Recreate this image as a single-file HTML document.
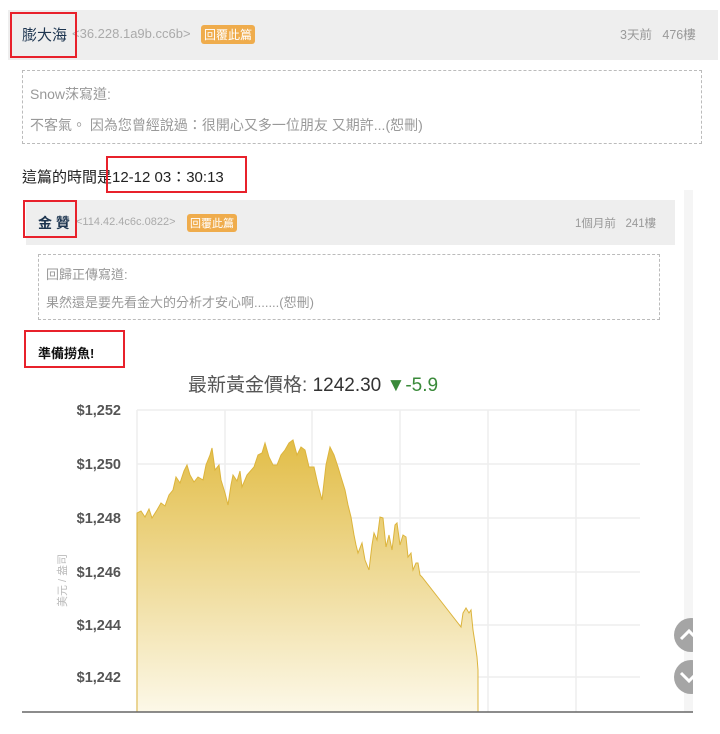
<!DOCTYPE html>
<html><head><meta charset="utf-8"><style>
body{margin:0;width:720px;height:734px;background:#fff;position:relative;overflow:hidden;font-family:"Liberation Sans","Noto Sans CJK TC",sans-serif;}
.a{position:absolute;white-space:nowrap;}
.red{position:absolute;border:2px solid #e8212b;box-sizing:border-box;}
.tag{background:#efac4c;color:#fff;border-radius:3px;padding:1px 3px;}
</style></head><body>
<div class="a" style="left:8px;top:10px;width:710px;height:50px;background:#eeeeee"></div>
<div class="a" style="left:22px;top:24px;font-size:15px;color:#1d3550">膨大海</div>
<div class="a" style="left:72px;top:26px;font-size:13px;color:#aaa">&lt;36.228.1a9b.cc6b&gt;</div>
<div class="a tag" style="left:201px;top:25px;font-size:12px;">回覆此篇</div>
<div class="a" style="left:620px;top:24px;font-size:12.5px;color:#999">3天前 &nbsp; 476樓</div>
<div class="red" style="left:10px;top:12px;width:67px;height:46px"></div>
<div class="a" style="left:22px;top:70px;width:680px;height:74px;border:1px dashed #bbb;box-sizing:border-box"></div>
<div class="a" style="left:30px;top:84px;font-size:14px;color:#999">Snow莯寫道:</div>
<div class="a" style="left:30px;top:115px;font-size:14px;color:#999">不客氣。 因為您曾經說過：很開心又多一位朋友 又期許...(恕刪)</div>
<div class="a" style="left:22px;top:166px;font-size:15px;color:#222">這篇的時間是12-12 03：30:13</div>
<div class="red" style="left:106px;top:156px;width:141px;height:37px"></div>
<div class="a" style="left:684px;top:190px;width:9px;height:522px;background:#f5f5f5"></div>
<div class="a" style="left:26px;top:200px;width:649px;height:45px;background:#eeeeee"></div>
<div class="a" style="left:38px;top:213px;font-size:14px;font-weight:bold;color:#1d3550">金 贊</div>
<div class="a" style="left:76px;top:216px;font-size:11px;color:#aaa">&lt;114.42.4c6c.0822&gt;</div>
<div class="a tag" style="left:187px;top:214px;font-size:11px;">回覆此篇</div>
<div class="a" style="left:575px;top:215px;font-size:11.5px;color:#999">1個月前 &nbsp; 241樓</div>
<div class="red" style="left:23px;top:200px;width:54px;height:38px"></div>
<div class="a" style="left:38px;top:254px;width:622px;height:66px;border:1px dashed #bbb;box-sizing:border-box"></div>
<div class="a" style="left:46px;top:264px;font-size:13px;color:#999">回歸正傳寫道:</div>
<div class="a" style="left:46px;top:292px;font-size:13px;color:#999">果然還是要先看金大的分析才安心啊.......(恕刪)</div>
<div class="a" style="left:38px;top:343px;font-size:13px;font-weight:bold;color:#111">準備撈魚!</div>
<div class="red" style="left:24px;top:330px;width:101px;height:38px"></div>
<div class="a" style="left:188px;top:370px;font-size:19px;color:#555">最新黃金價格: <span style="color:#333">1242.30</span> <span style="color:#3a8a3a">▼-5.9</span></div>
<svg class="a" style="left:0;top:395px" width="720" height="339">
<defs><linearGradient id="g" x1="0" y1="0" x2="0" y2="1"><stop offset="0" stop-color="#e2bd47"/><stop offset="1" stop-color="#fcf8e8"/></linearGradient></defs>
<g stroke="#eee" stroke-width="1.5">
<line x1="137" y1="15" x2="640" y2="15"/><line x1="137" y1="69" x2="640" y2="69"/><line x1="137" y1="123" x2="640" y2="123"/><line x1="137" y1="177" x2="640" y2="177"/><line x1="137" y1="230" x2="640" y2="230"/><line x1="137" y1="282" x2="640" y2="282"/>
<line x1="137" y1="15" x2="137" y2="317"/><line x1="225" y1="15" x2="225" y2="317"/><line x1="312" y1="15" x2="312" y2="317"/><line x1="400" y1="15" x2="400" y2="317"/><line x1="488" y1="15" x2="488" y2="317"/><line x1="576" y1="15" x2="576" y2="317"/>
</g>
<path fill="url(#g)" stroke="#dcb43c" stroke-width="1" d="M137,317 L137,118 L141,116 L145,122 L149,114 L152,123 L157,115 L161,108 L165,111 L169,100 L173,95 L176,82 L180,88 L184,76 L187,70 L190,80 L194,87 L198,82 L203,85 L206,70 L210,60 L212,53 L215,75 L219,70 L221,85 L225,98 L228,110 L231,90 L233,80 L237,86 L240,76 L242,92 L247,80 L254,72 L258,60 L262,58 L265,48 L269,62 L273,70 L277,70 L281,60 L285,55 L289,48 L293,45 L297,60 L301,52 L305,55 L309,72 L314,72 L318,90 L322,105 L326,70 L330,52 L334,60 L338,72 L341,82 L345,95 L348,110 L351,122 L354,140 L356,150 L358,158 L362,148 L365,165 L369,175 L372,150 L374,138 L377,145 L380,122 L383,123 L386,152 L389,140 L392,155 L395,130 L397,128 L400,150 L403,140 L406,142 L408,162 L411,158 L413,175 L416,168 L418,168 L420,180 L422,182 L440,205 L461,232 L463,218 L466,213 L469,218 L471,215 L473,235 L475,248 L477,262 L478,275 L478,317 Z"/>
<g font-size="14.5" fill="#555" font-weight="bold" text-anchor="end">
<text x="121" y="20">$1,252</text><text x="121" y="74">$1,250</text><text x="121" y="128">$1,248</text><text x="121" y="182">$1,246</text><text x="121" y="235">$1,244</text><text x="121" y="287">$1,242</text>
</g>
<text x="0" y="0" font-size="11" fill="#bbb" transform="translate(66,212) rotate(-90)">美元 / 盎司</text>
<line x1="22" y1="317" x2="693" y2="317" stroke="#666" stroke-width="1.5"/>
</svg>
<div class="a" style="left:673px;top:617px;width:20px;height:80px;overflow:hidden">
<svg width="40" height="80"><circle cx="18" cy="18" r="17" fill="#a5a5a5"/><circle cx="18" cy="60" r="17" fill="#a5a5a5"/>
<path d="M8,22 L16,14 L24,22" stroke="#fff" stroke-width="3" fill="none"/><path d="M8,56 L16,64 L24,56" stroke="#fff" stroke-width="3" fill="none"/></svg></div>
</body></html>
